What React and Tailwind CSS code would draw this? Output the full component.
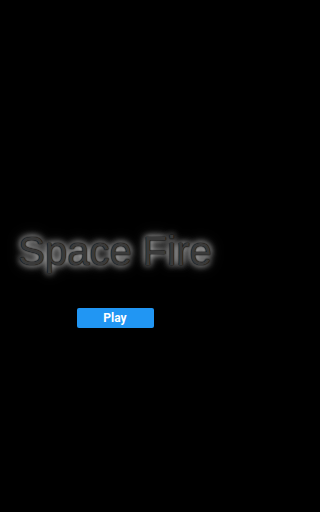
export default function App() {
  return (
    <div className="min-h-screen w-full bg-black">
      <div className="w-[230px] h-[512px] bg-black flex flex-col items-center pt-[228px]" style={{ fontFamily: '"Liberation Sans", Arial, sans-serif' }}>
        <h1 className="text-[40px] leading-[46px] text-[#3a3a3a] [text-shadow:0_0_1.5px_#000,0_0_1.5px_#000,0_0_6px_rgba(255,255,255,0.85),0_0_10px_rgba(255,255,255,0.55),0_0_16px_rgba(255,255,255,0.25)]">
          Space Fire
        </h1>
        <button className="mt-[34px] w-[77px] h-[20px] bg-[#2196f3] rounded-[2px] text-white text-[12px] font-bold flex items-center justify-center" style={{ fontFamily: 'Roboto, "Liberation Sans", sans-serif' }}>
          Play
        </button>
      </div>
    </div>
  );
}
